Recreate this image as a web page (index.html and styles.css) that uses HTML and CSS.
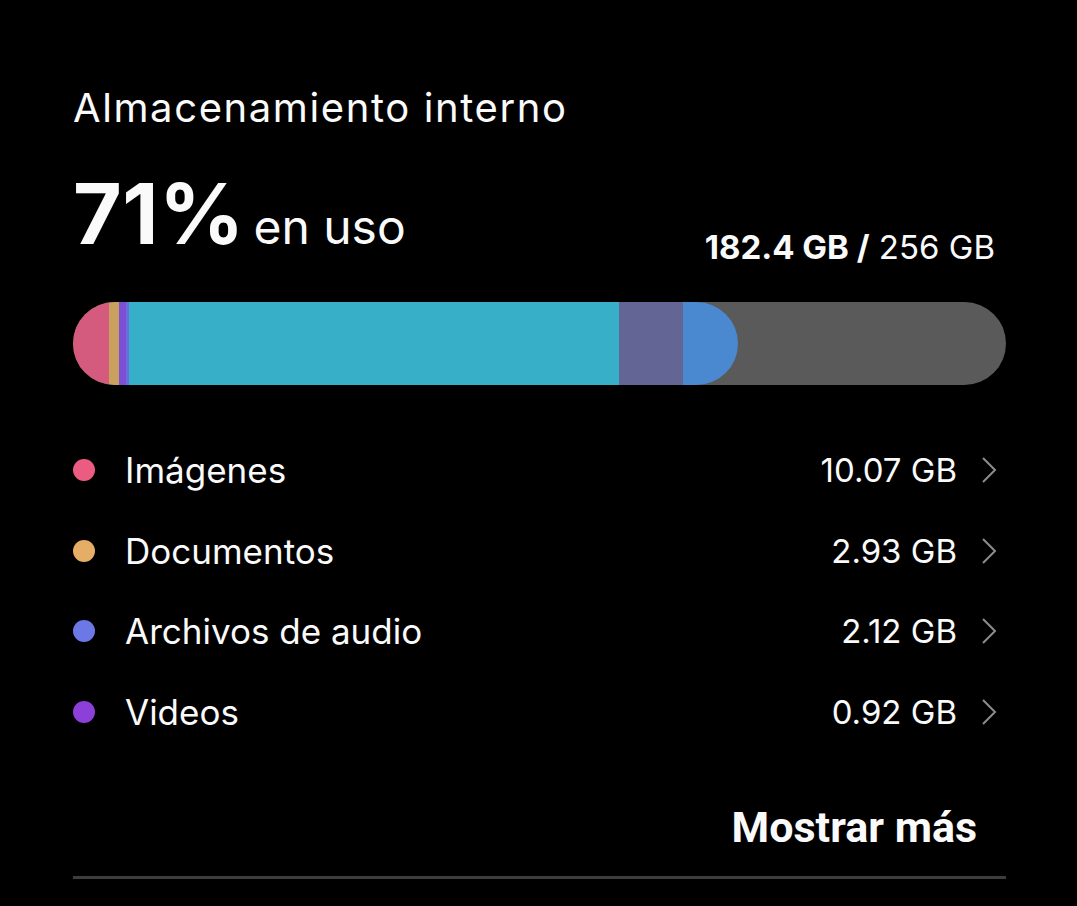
FILE: index.html
```html
<!DOCTYPE html>
<html lang="es">

<head>
    <meta charset="utf-8">
    <title>Almacenamiento</title>
    <link rel="stylesheet" href="styles.css">
</head>

<body>
    <div class="card">
        <h2 class="title">Almacenamiento interno</h2>

        <div class="usage">
            <div class="percent"><b>71%</b> <span>en uso</span></div>
            <div class="total"><b>182.4 GB /</b> 256 GB</div>
        </div>

        <div class="bar">
            <div class="used">
                <span class="seg img" style="width: 36px"></span>
                <span class="seg doc" style="width: 10px"></span>
                <span class="seg vid" style="width: 7px"></span>
                <span class="seg aud" style="width: 3px"></span>
                <span class="seg app" style="width: 490px"></span>
                <span class="seg sys" style="width: 64px"></span>
                <span class="seg oth" style="width: 55px"></span>
            </div>
        </div>

        <ul class="list">
            <li class="row">
                <i class="dot img"></i>
                <span class="label">Imágenes</span>
                <span class="size">10.07 GB</span>
                <svg class="chev" viewBox="0 0 16 28"><path d="M2 2 L14 14 L2 26" /></svg>
            </li>
            <li class="row">
                <i class="dot doc"></i>
                <span class="label">Documentos</span>
                <span class="size">2.93 GB</span>
                <svg class="chev" viewBox="0 0 16 28"><path d="M2 2 L14 14 L2 26" /></svg>
            </li>
            <li class="row">
                <i class="dot aud"></i>
                <span class="label">Archivos de audio</span>
                <span class="size">2.12 GB</span>
                <svg class="chev" viewBox="0 0 16 28"><path d="M2 2 L14 14 L2 26" /></svg>
            </li>
            <li class="row">
                <i class="dot vid"></i>
                <span class="label">Videos</span>
                <span class="size">0.92 GB</span>
                <svg class="chev" viewBox="0 0 16 28"><path d="M2 2 L14 14 L2 26" /></svg>
            </li>
        </ul>

        <div class="more">Mostrar más</div>
        <div class="divider"></div>
    </div>
</body>

</html>
```

FILE: styles.css
```css
body {
    margin: 0;
    background-color: #000;
    color: #fafafa;
    font-family: "Inter", "Noto Sans", sans-serif;
}

.card {
    width: 933px;
    padding: 82px 0 0 73px;
}

.title {
    margin: 0;
    font-size: 40px;
    font-weight: 400;
    line-height: 52px;
    letter-spacing: 1.6px;
}

.usage {
    display: flex;
    justify-content: space-between;
    align-items: baseline;
    margin-top: 34px;
}

.percent b {
    font-size: 84px;
    font-weight: 700;
    letter-spacing: 0.5px;
    line-height: 92px;
}

.percent span {
    font-size: 48px;
    margin-left: 4px;
}

.total {
    font-size: 33px;
    margin-right: 11px;
    position: relative;
    top: 15px;
}

.total b {
    font-weight: 700;
}

.bar {
    margin-top: 42px;
    height: 83px;
    border-radius: 42px;
    background-color: #5a5a5a;
    overflow: hidden;
}

.used {
    display: flex;
    height: 100%;
    width: max-content;
    border-radius: 0 42px 42px 0;
    overflow: hidden;
}

.seg {
    display: block;
    height: 100%;
}

.img { background-color: #d45b7e; }
.doc { background-color: #caa05f; }
.vid { background-color: #7d4fd6; }
.aud { background-color: #6a6fe0; }
.app { background-color: #38afc9; }
.sys { background-color: #636594; }
.oth { background-color: #4a89cf; }

.list {
    list-style: none;
    margin: 45px 0 0;
    padding: 0;
}

.row {
    display: flex;
    align-items: center;
    height: 80.5px;
}

.dot {
    width: 22px;
    height: 22px;
    border-radius: 50%;
    flex: none;
}

.dot.img { background-color: #ec5b82; }
.dot.doc { background-color: #e5ad66; }
.dot.aud { background-color: #6b78e6; }
.dot.vid { background-color: #8d3fd9; }

.label {
    margin-left: 30px;
    font-size: 35px;
    flex: 1;
}

.size {
    font-size: 33px;
}

.chev {
    width: 16px;
    height: 28px;
    margin: 0 9px 0 24px;
    fill: none;
    stroke: #8c8c8c;
    stroke-width: 2;
}

.more {
    text-align: right;
    margin-top: 50px;
    margin-right: 29px;
    font-family: "Roboto", sans-serif;
    font-size: 43px;
    font-weight: 700;
}

.divider {
    margin-top: 24px;
    height: 3px;
    background-color: #3d3d3d;
}
```
